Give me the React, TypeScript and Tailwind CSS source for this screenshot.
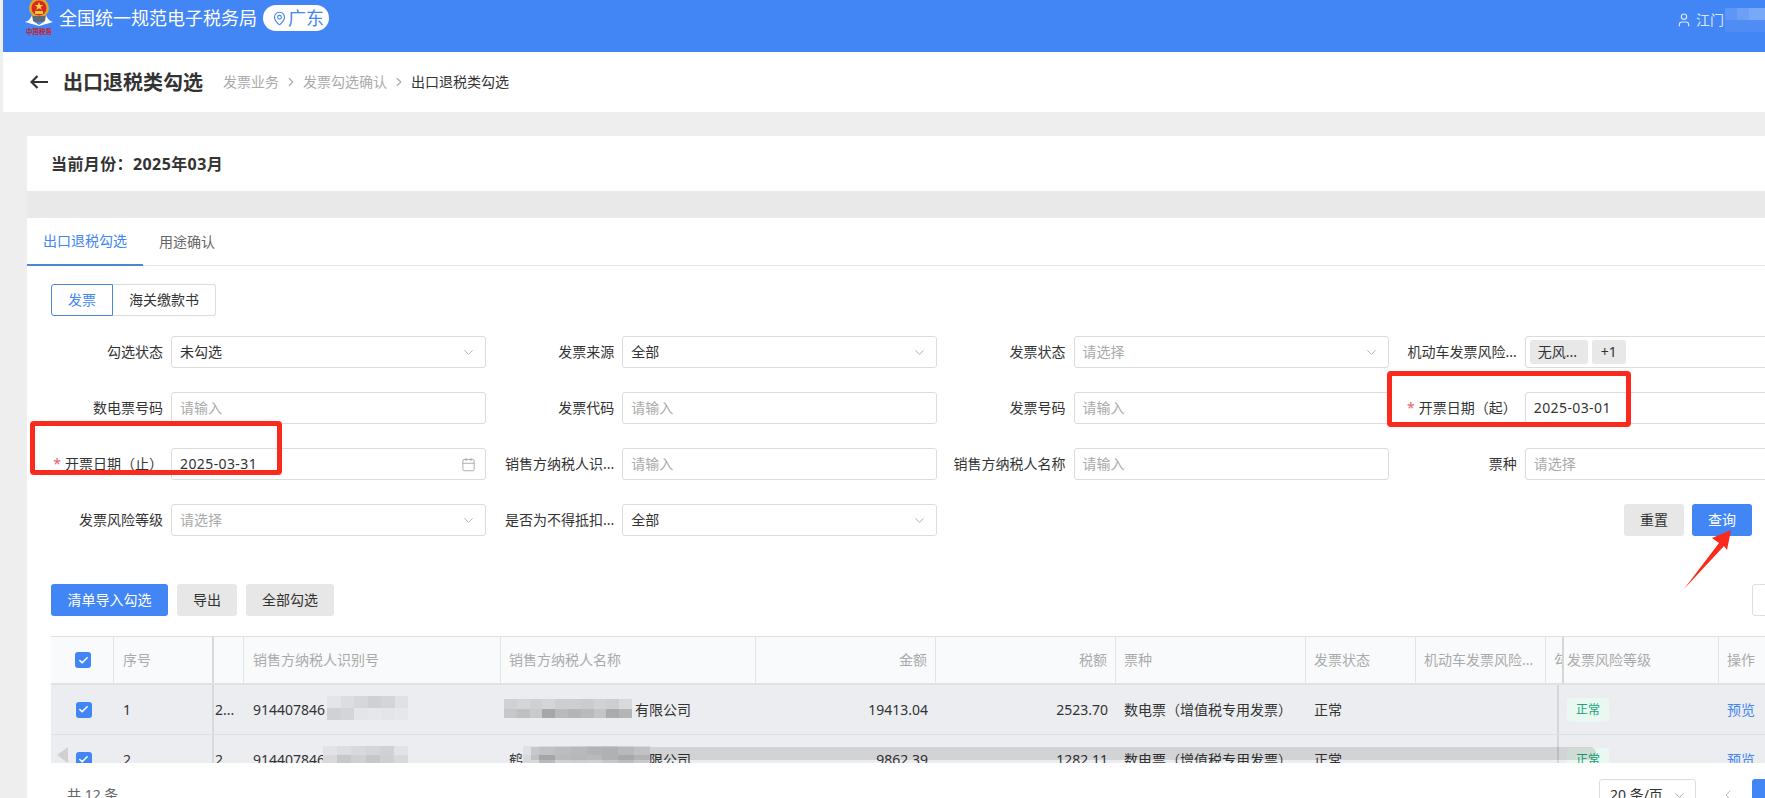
import { Calendar, Check, ChevronDown, ChevronLeft, ChevronRight, MapPin, User } from "lucide-react";

const ROW_GRID =
    "grid grid-cols-[63px_100px_30px_257px_255px_180px_180px_190px_110px_130px_13px_160px_65px]";

const HEAD_CELL = "flex items-center px-2 border-r border-[#e3e4e6] whitespace-nowrap overflow-hidden";
const BODY_CELL = "flex items-center px-2 whitespace-nowrap overflow-hidden";

const ROWS = [
    { no: "1", id: "914407846", name: "", nameTail: "有限公司", amount: "19413.04", tax: "2523.70" },
    { no: "2", id: "914407846", name: "鹤", nameTail: "限公司", amount: "9862.39", tax: "1282.11" },
];

function Logo() {
    return (
        <div className="flex flex-col items-center w-[28px] ml-[22px] mr-[6px] h-[52px]">
            <svg width="28" height="27" viewBox="0 0 28 27">
                <circle cx="14" cy="8" r="10" fill="#e2a52c" />
                <circle cx="14" cy="8" r="7.5" fill="#d8281f" />
                <path d="M14 2l1.2 3h3l-2.4 1.9.9 3L14 8.2l-2.7 1.7.9-3L9.800 5h3z" fill="#f7d23e" />
                <rect x="10" y="11" width="8" height="3" fill="#f0c540" />
                <path d="M6 16h16l-2 6h-12z" fill="#5d6b78" />
                <path d="M0 22c4-1 6-4 7-7l1 6 6 4 6-4 1-6c1 3 3 6 7 7l-14 4z" fill="#ffffff" />
            </svg>
            <span className="mt-[1px] text-[6.500px] leading-[8px] font-bold text-[#c9201d] whitespace-nowrap">中国税务</span>
        </div>
    );
}

function Field({ label, required, children }: { label: string; required?: boolean; children: React.ReactNode }) {
    return (
        <div className="flex items-center gap-2 h-8">
            <label className="w-[112px] shrink-0 text-right text-sm text-[#333] whitespace-nowrap">
                {required && <span className="text-[#e4626a] mr-1">*</span>}
                {label}
            </label>
            {children}
        </div>
    );
}

function Select({ value, placeholder }: { value?: string; placeholder?: string }) {
    return (
        <div className="w-[315px] h-8 shrink-0 flex items-center justify-between bg-white border border-[#dcdcdc] rounded-[3px] pl-2 pr-[9px] text-sm">
            <span className={value ? "text-[#333]" : "text-[#aaa]"}>{value ?? placeholder}</span>
            <ChevronDown size={15} strokeWidth={1.5} className="text-[#aaa]" />
        </div>
    );
}

function Input({ value, icon }: { value?: string; icon?: boolean }) {
    return (
        <div className="w-[315px] h-8 shrink-0 flex items-center justify-between bg-white border border-[#dcdcdc] rounded-[3px] pl-2 pr-[9px] text-sm">
            <span className={value ? "text-[#333] tracking-[0.4px]" : "text-[#aaa]"}>{value ?? "请输入"}</span>
            {icon && <Calendar size={15} strokeWidth={1.5} className="text-[#aaa]" />}
        </div>
    );
}

// pixelated blur the screenshot has over company data
function Mosaic({ className, rows }: { className: string; rows: string[][] }) {
    return (
        <div className={`absolute flex flex-col blur-[0.6px] ${className}`}>
            {rows.map((cells, i) => (
                <div key={i} className="flex flex-1">
                    {cells.map((c, j) => (
                        <div key={j} className="flex-1" style={{ background: c }} />
                    ))}
                </div>
            ))}
        </div>
    );
}

export default function App() {
    return (
        <div className="relative w-[1765px] h-[798px] overflow-hidden bg-[#eeeeee] pl-[3px] font-['Noto_Sans','Noto_Sans_CJK_SC',sans-serif] text-[#333]">
            {/* Top bar */}
            <header className="flex items-start h-[52px] bg-[#4285f4] text-white">
                <Logo />
                <span className="text-[18px] leading-[36px] whitespace-nowrap">全国统一规范电子税务局</span>
                <div className="flex items-center h-[26px] mt-[5px] ml-[6px] w-[66px] pl-[9px] rounded-[13px] bg-white text-[#4285f4] text-[18px]">
                    <MapPin size={15} strokeWidth={1.75} className="mr-[1px] shrink-0" />
                    <span className="whitespace-nowrap">广东</span>
                </div>
                <div className="flex items-center h-[40px] ml-auto text-sm text-[#dbe7ff]">
                    <User size={16} strokeWidth={1.75} className="mr-[4px]" />
                    <span>江门</span>
                    <div className="w-[40px] h-[24px] ml-[1px] flex flex-col">
                        <div className="h-[12px] flex">
                            <div className="w-[12px] bg-[#5d96f6]" />
                            <div className="w-[12px] bg-[#6d9ff7]" />
                            <div className="w-[16px] bg-[#7aa8f8]" />
                        </div>
                        <div className="h-[12px] bg-[#4f8df5]" />
                    </div>
                </div>
            </header>

            {/* Page title */}
            <div className="flex items-center h-[60px] bg-white pl-[27px]">
                <svg width="18" height="14" viewBox="0 0 18 14" fill="none" stroke="#333" strokeWidth="2.2">
                    <path d="M1.500 7H18M7.500 1L1.500 7l6 6" />
                </svg>
                <h1 className="ml-[15px] mt-[2px] text-[20px] font-bold text-[#333] whitespace-nowrap">出口退税类勾选</h1>
                <nav className="flex items-center ml-[20px] text-sm text-[#aaa]">
                    <span>发票业务</span>
                    <ChevronRight size={14} className="mx-[5px]" />
                    <span>发票勾选确认</span>
                    <ChevronRight size={14} className="mx-[5px]" />
                    <span className="text-[#333]">出口退税类勾选</span>
                </nav>
            </div>

            <main className="pl-6 pt-6">
                <div className="flex items-center h-[55px] bg-white pl-6 text-base font-bold tracking-[0.4px] text-[#333]">
                    当前月份：2025年03月
                </div>
                <div className="h-[27px] bg-[#e9e9e9]" />

                <section className="bg-white h-[580px]">
                    {/* Tabs */}
                    <div className="flex h-[48px] border-b border-[#e4e4e4] text-sm">
                        <div className="flex items-center justify-center w-[116px] h-[48px] border-b-2 border-[#4a86d8] text-[#4285f4]">
                            出口退税勾选
                        </div>
                        <div className="flex items-center ml-4 text-[#666]">用途确认</div>
                    </div>

                    <div className="pl-6 pt-[18px]">
                        {/* Invoice kind switch */}
                        <div className="flex h-8 text-sm">
                            <div className="flex items-center justify-center w-[62px] border border-[#4a86d8] rounded-l-[3px] text-[#4285f4]">
                                发票
                            </div>
                            <div className="flex items-center justify-center w-[103px] border border-l-0 border-[#dcdcdc] rounded-r-[3px]">
                                海关缴款书
                            </div>
                        </div>

                        {/* Filters */}
                        <div className="grid grid-cols-[repeat(4,435px)] gap-x-[16.250px] gap-y-6 mt-5">
                            <Field label="勾选状态"><Select value="未勾选" /></Field>
                            <Field label="发票来源"><Select value="全部" /></Field>
                            <Field label="发票状态"><Select placeholder="请选择" /></Field>
                            <Field label="机动车发票风险...">
                                <div className="w-[315px] h-8 shrink-0 flex items-center gap-1 bg-white border border-[#dcdcdc] rounded-[3px] pl-1 text-sm">
                                    <span className="flex items-center w-[58px] h-6 pl-2 rounded-[3px] bg-[#e8e8e8]">无风...</span>
                                    <span className="flex items-center justify-center w-[34px] h-6 rounded-[3px] bg-[#e8e8e8]">+1</span>
                                </div>
                            </Field>

                            <Field label="数电票号码"><Input /></Field>
                            <Field label="发票代码"><Input /></Field>
                            <Field label="发票号码"><Input /></Field>
                            <Field label="开票日期（起）" required><Input value="2025-03-01" icon /></Field>

                            <Field label="开票日期（止）" required><Input value="2025-03-31" icon /></Field>
                            <Field label="销售方纳税人识..."><Input /></Field>
                            <Field label="销售方纳税人名称"><Input /></Field>
                            <Field label="票种"><Select placeholder="请选择" /></Field>

                            <Field label="发票风险等级"><Select placeholder="请选择" /></Field>
                            <Field label="是否为不得抵扣..."><Select value="全部" /></Field>
                            <div />
                            <div className="flex justify-end gap-2 w-[347.250px] text-sm">
                                <button type="button" className="w-[60px] h-8 rounded-[3px] bg-[#e7e7e7] text-[#333]">重置</button>
                                <button type="button" className="w-[60px] h-8 rounded-[3px] bg-[#4285f4] text-white">查询</button>
                            </div>
                        </div>

                        {/* Toolbar */}
                        <div className="flex justify-between w-[1733px] mt-12 text-sm">
                            <div className="flex gap-[9px]">
                                <button type="button" className="w-[117px] h-8 rounded-[3px] bg-[#4285f4] text-white">清单导入勾选</button>
                                <button type="button" className="w-[60px] h-8 rounded-[3px] bg-[#e7e7e7]">导出</button>
                                <button type="button" className="w-[88px] h-8 rounded-[3px] bg-[#e7e7e7]">全部勾选</button>
                            </div>
                            <div className="w-8 h-8 rounded-[3px] border border-[#dcdcdc]" />
                        </div>

                        {/* Table */}
                        <div className="relative w-[1733px] h-[127px] mt-5 overflow-hidden border-t border-[#e0e1e3] text-sm">
                            <div className={`${ROW_GRID} h-[48px] bg-[#f9fafb] border-b-2 border-[#e0e1e3] text-[#aaa]`}>
                                <div className={`${HEAD_CELL} justify-center pl-[10px]`}>
                                    <span className="flex items-center justify-center w-4 h-4 rounded-[3px] bg-[#4285f4] text-white">
                                        <Check size={11} strokeWidth={3.500} />
                                    </span>
                                </div>
                                <div className={`${HEAD_CELL} pl-[9px] border-r-2 border-r-[#d8d9dc]`}>序号</div>
                                <div className={HEAD_CELL} />
                                <div className={`${HEAD_CELL} pl-[9px]`}>销售方纳税人识别号</div>
                                <div className={HEAD_CELL}>销售方纳税人名称</div>
                                <div className={`${HEAD_CELL} justify-end`}>金额</div>
                                <div className={`${HEAD_CELL} justify-end`}>税额</div>
                                <div className={HEAD_CELL}>票种</div>
                                <div className={HEAD_CELL}>发票状态</div>
                                <div className={HEAD_CELL}>机动车发票风险...</div>
                                <div className={`${HEAD_CELL} border-r-2 border-r-[#d5d6d8]`}>勾选时间</div>
                                <div className={HEAD_CELL}>发票风险等级</div>
                                <div className={HEAD_CELL}>操作</div>
                            </div>

                            {ROWS.map((row) => (
                                <div key={row.no} className={`${ROW_GRID} h-[50px] bg-[#ecedf0] border-b border-[#dfe0e2]`}>
                                    <div className={`${BODY_CELL} justify-center pl-[10px]`}>
                                        <span className="flex items-center justify-center w-4 h-4 rounded-[3px] bg-[#4285f4] text-white">
                                            <Check size={11} strokeWidth={3.500} />
                                        </span>
                                    </div>
                                    <div className={`${BODY_CELL} pl-[9px] border-r-2 border-[#d8d9dc]`}>{row.no}</div>
                                    <div className="flex items-center pl-[1px] whitespace-nowrap overflow-hidden">2...</div>
                                    <div className={`${BODY_CELL} pl-[9px]`}>{row.id}</div>
                                    <div className={BODY_CELL}>
                                        <div className="flex justify-between w-[182px]">
                                            <span>{row.name}</span>
                                            <span>{row.nameTail}</span>
                                        </div>
                                    </div>
                                    <div className={`${BODY_CELL} justify-end`}>{row.amount}</div>
                                    <div className={`${BODY_CELL} justify-end`}>{row.tax}</div>
                                    <div className={BODY_CELL}>数电票（增值税专用发票）</div>
                                    <div className={BODY_CELL}>正常</div>
                                    <div className={BODY_CELL} />
                                    <div className="border-r-2 border-[#d5d6d8]" />
                                    <div className={BODY_CELL}>
                                        <span className="flex items-center justify-center w-[42px] h-6 rounded-[3px] bg-[#e9f8f1] text-xs text-[#16a37a]">正常</span>
                                    </div>
                                    <div className={`${BODY_CELL} text-[#4285f4]`}>预览</div>
                                </div>
                            ))}

                            <Mosaic
                                className="left-[276px] top-[59px] w-[81px] h-[24px]"
                                rows={[
                                    ["#e4e5e8", "#dcdde0", "#d6d7da", "#cfd0d3", "#d4d5d8", "#e0e1e4"],
                                    ["#d0d1d4", "#d4d5d8", "#e4e5e8", "#e6e7ea", "#e4e5e8", "#e6e7ea"],
                                ]}
                            />
                            <Mosaic
                                className="left-[453px] top-[62px] w-[128px] h-[19px]"
                                rows={[
                                    ["#d0d1d3", "#d4d5d7", "#cfd0d2", "#d4d5d7", "#cdced0", "#cdced0", "#cbccce", "#d0d1d3", "#cdced0", "#d8d9db"],
                                    ["#c6c7c9", "#bfc0c2", "#c9cacc", "#a6a7a9", "#b9babc", "#b4b5b7", "#b9babc", "#c4c5c7", "#aaabad", "#b4b5b7"],
                                ]}
                            />
                            <Mosaic
                                className="left-[272px] top-[109px] w-[85px] h-[18px]"
                                rows={[
                                    ["#e2e3e6", "#dcdde0", "#d8d9dc", "#d4d5d8", "#d0d1d4", "#e2e3e6"],
                                    ["#d8d9dc", "#c6c7ca", "#cfd0d3", "#c6c7ca", "#cfd0d3", "#d8d9dc"],
                                ]}
                            />
                            <Mosaic
                                className="left-[472px] top-[109px] w-[127px] h-[18px]"
                                rows={[
                                    ["#e0e1e4", "#d8d9dc", "#d4d5d8", "#cfd0d3", "#c9cacd", "#c6c7ca", "#cfd0d3", "#d8d9dc"],
                                    ["#d8d9dc", "#b9babd", "#d0d1d4", "#cdced1", "#d0d1d4", "#c6c7ca", "#bcbdc0", "#c9cacd"],
                                ]}
                            />

                            {/* Horizontal scrollbar over the rows */}
                            <div className="absolute left-[480px] top-[110px] w-[1065px] h-[13px] rounded-r-[6px] bg-[rgba(0,0,0,0.11)]" />
                            <svg className="absolute left-[6px] top-[110px]" width="11" height="16" viewBox="0 0 11 16">
                                <path d="M11 0v16L0 8z" fill="#cfd0d2" />
                            </svg>
                        </div>

                        {/* Pagination */}
                        <div className="flex items-center justify-between w-[1733px] mt-4 text-sm text-[#666]">
                            <span className="pl-4">共 12 条</span>
                            <div className="flex items-center">
                                <div className="flex items-center justify-between w-[97px] h-8 pl-[10px] pr-2 border border-[#dcdcdc] rounded-[3px] text-[#333]">
                                    <span className="whitespace-nowrap">20 条/页</span>
                                    <ChevronDown size={15} strokeWidth={1.5} className="text-[#aaa]" />
                                </div>
                                <ChevronLeft size={16} strokeWidth={1.5} className="ml-6 text-[#bbb]" />
                                <div className="w-8 h-8 ml-4 rounded-[3px] bg-[#4285f4]" />
                            </div>
                        </div>
                    </div>
                </section>
            </main>

            {/* Red annotations drawn over the screenshot */}
            <div className="absolute left-[30px] top-[421px] w-[252px] h-[54px] border-[5px] border-[#fb2a1c] rounded-[4px]" />
            <div className="absolute left-[1387px] top-[371px] w-[244px] h-[56px] border-[5px] border-[#fb2a1c] rounded-[4px]" />
            <svg className="absolute left-[1680px] top-[525px]" width="55" height="68" viewBox="0 0 55 68">
                <path d="M4 64L39 18L32 13L51 5L47 25L44 21z" fill="#fb2a1c" />
            </svg>
        </div>
    );
}
